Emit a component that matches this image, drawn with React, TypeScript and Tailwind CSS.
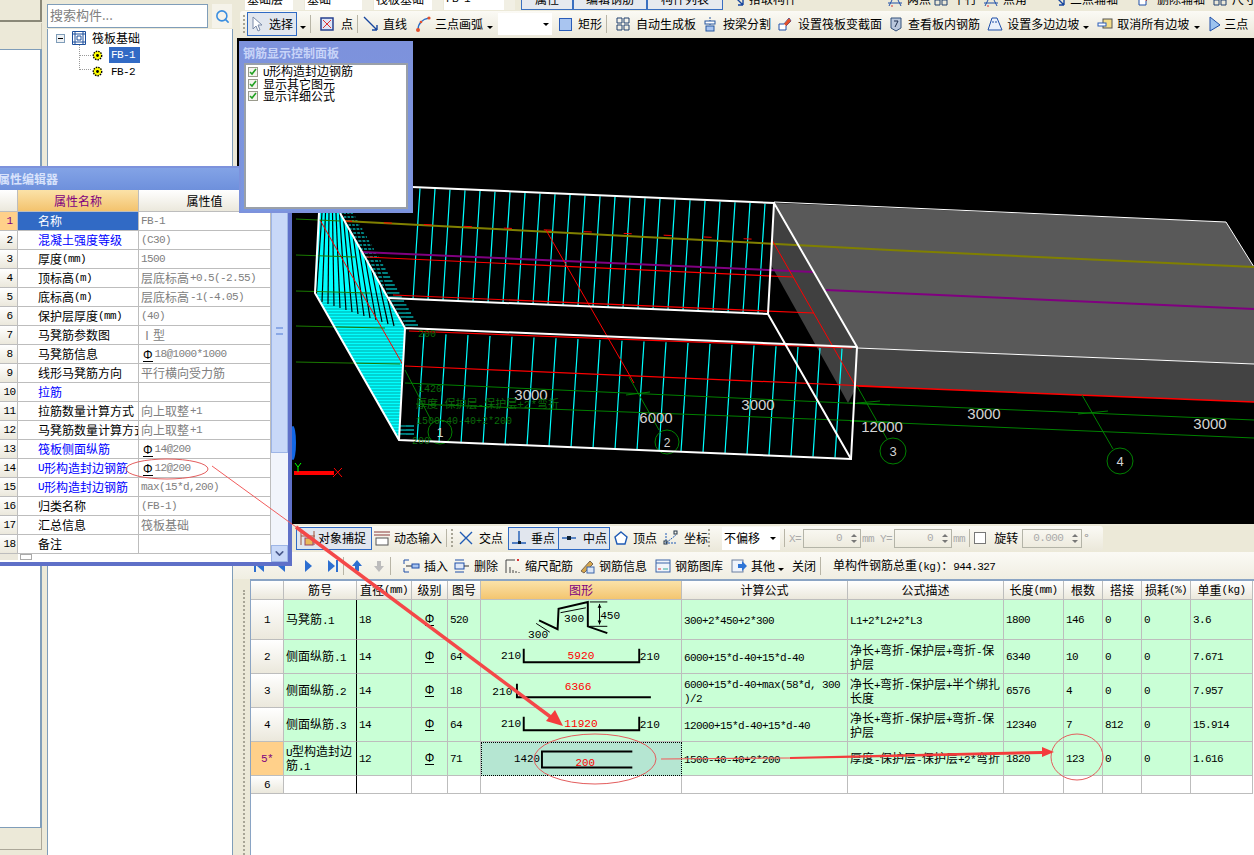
import type { ReactNode } from 'react';
import { Search, ChevronDown } from 'lucide-react';

// SimSun-like mix: CJK at 12px, latin squeezed to 6px per char
function T({ children }: { children: string }) {
  const parts = children.split(/([\x20-\x7e]+)/).filter(Boolean);
  return (
    <>
      {parts.map((p, i) =>
        /^[\x20-\x7e]+$/.test(p) ? (
          <span key={i} className="font-['Liberation_Mono',monospace] text-[11px] tracking-[-0.6px]">{p}</span>
        ) : (
          <span key={i}>{p}</span>
        ),
      )}
    </>
  );
}

function Grade() {
  return <span className="inline-block border-b border-current font-['Liberation_Sans',sans-serif] text-[12px] leading-[11px]">Φ</span>;
}

function Svg({ children, w = 16 }: { children: ReactNode; w?: number }) {
  return <svg width={w} height={16} viewBox={`0 0 ${w} 16`} fill="none" className="shrink-0">{children}</svg>;
}

const Cursor = () => <Svg><path d="M4 1v12l3-3 2 5 2-1-2-5h4z" fill="#fff" stroke="#7a8aa8" /></Svg>;
const PointIco = () => <Svg><rect x="2" y="2" width="12" height="12" fill="#dfe6f7" stroke="#27408f" strokeWidth="1.5" /><path d="M4 4l8 8M12 4l-8 8" stroke="#d33" /></Svg>;
const LineIco = () => <Svg><path d="M1 1l13 13M14 14v-5M14 14H9" stroke="#17469e" strokeWidth="1.4" /></Svg>;
const ArcIco = () => <Svg><path d="M3 14C3 7 8 3 14 2" stroke="#2b6cc4" strokeWidth="1.5" /><circle cx="3" cy="14" r="2" fill="#e2502c" /><circle cx="14" cy="2" r="1.6" fill="#e2502c" /><circle cx="6" cy="6" r="1.3" fill="#e2502c" /></Svg>;
const RectIco = () => <Svg><rect x="1.5" y="2.5" width="12" height="12" fill="#a9c5f0" stroke="#2a5cb8" /></Svg>;
const GridIco = () => <Svg><path d="M2 2h5v5H2zM9 2h5v5H9zM2 9h5v5H2zM9 9h5v5H9z" stroke="#21406f" /></Svg>;
const SplitIco = () => <Svg><path d="M8 1v14" stroke="#26569e" strokeDasharray="2 1" /><rect x="3" y="5" width="10" height="3" fill="#fff" stroke="#26569e" /><rect x="4" y="10" width="8" height="5" fill="#a9c5f0" stroke="#26569e" /></Svg>;
const SectionIco = () => <Svg><path d="M2 14V8h5l5-6 2 3-5 5v4z" fill="#fff" stroke="#1f4fa8" /><path d="M7 8l5-6 2 3-5 5z" fill="#e2502c" /></Svg>;
const ViewIco = () => <Svg><path d="M3 2h10v10l-5 3-5-3z" fill="#b9c7dc" stroke="#33507a" /><path d="M6 5h4L7 11" stroke="#1c2d4c" /></Svg>;
const SlopeIco = () => <Svg><path d="M1 14L5 2h5l5 12z" fill="#eaf1fb" stroke="#1f4fa8" /><path d="M5 6h6" stroke="#1f4fa8" strokeDasharray="2 1" /></Svg>;
const CancelIco = () => <Svg><rect x="6" y="3" width="9" height="9" fill="#f3dc88" stroke="#555" /><rect x="1" y="7" width="8" height="3" fill="#fff" stroke="#2a5cb8" /></Svg>;
const ThreeIco = () => <Svg><path d="M3 1v14l10-6z" fill="#9cc3ef" stroke="#1f4fa8" /></Svg>;
const SnapIco = () => <Svg><path d="M1 1v14M14 1v14M1 6h14" stroke="#a0523d" /><rect x="5" y="8" width="8" height="7" fill="#e8b95a" stroke="#946" /></Svg>;
const DynIco = () => <Svg><path d="M0 2h16M0 5h16" stroke="#8a3a3a" /><rect x="2" y="8" width="12" height="7" fill="#fff" stroke="#555" /></Svg>;
const CrossIco = () => <Svg><path d="M2 2l12 12M14 2L2 14" stroke="#1f5bb5" strokeWidth="1.4" /></Svg>;
const PerpIco = () => <Svg><path d="M8 1v12M1 13h14" stroke="#1f5bb5" strokeWidth="1.4" /><rect x="7" y="11" width="3" height="3" fill="#123" /></Svg>;
const MidIco = () => <Svg><path d="M1 8h14" stroke="#1f5bb5" strokeWidth="1.4" /><rect x="6" y="6" width="4" height="4" fill="#123" /></Svg>;
const VertexIco = () => <Svg><path d="M8 2l6 5-2 7H4L2 7z" stroke="#1f5bb5" strokeWidth="1.4" fill="#fff" /></Svg>;
const CoordIco = () => <Svg><path d="M3 13L13 5M3 3v10h10" stroke="#1f5bb5" strokeDasharray="2 1" /><rect x="11" y="1" width="3" height="3" stroke="#234" /><rect x="1" y="11" width="3" height="3" stroke="#234" /></Svg>;
const PlayIco = () => <Svg w={10}><path d="M2 2v12l7-6z" fill="#2d6fd0" /></Svg>;
const BackIco = () => <Svg w={10}><path d="M8 2v12L1 8z" fill="#2d6fd0" /></Svg>;
const LastIco = () => <Svg w={12}><path d="M1 2v12l7-6z" fill="#2d6fd0" /><path d="M9 2h2v12H9z" fill="#2d6fd0" /></Svg>;
const FirstIco = () => <Svg w={12}><path d="M11 2v12L4 8z" fill="#2d6fd0" /><path d="M1 2h2v12H1z" fill="#2d6fd0" /></Svg>;
const UpIco = () => <Svg w={14}><path d="M7 2l5 6H9v5H5V8H2z" fill="#2d6fd0" /></Svg>;
const DownIco = () => <Svg w={14}><path d="M7 14l5-6H9V3H5v5H2z" fill="#bcbcbc" /></Svg>;
const InsertIco = () => <Svg w={18}><path d="M7 2H2v4M7 14H2v-4" stroke="#1f4fa8" /><path d="M4 8h6" stroke="#333" /><rect x="10" y="6" width="7" height="4" fill="#a9c5f0" stroke="#1f4fa8" /></Svg>;
const DeleteIco = () => <Svg><path d="M1 2h9M1 14h9" stroke="#1f4fa8" /><rect x="1" y="5" width="9" height="6" fill="#dfe8f8" stroke="#1f4fa8" /><path d="M10 8h5" stroke="#333" /></Svg>;
const ScaleIco = () => <Svg><path d="M1 2v13M1 2h9M5 15V9M8 15v-3M11 15v-2M14 15v-1" stroke="#444" /><rect x="12" y="1" width="2" height="2" fill="#d33" /></Svg>;
const InfoIco = () => <Svg><path d="M2 13L11 3l3 3-9 9z" fill="#d7a74c" stroke="#765" /><rect x="8" y="9" width="7" height="6" fill="#dbe6f6" stroke="#3a64a8" /></Svg>;
const LibIco = () => <Svg><rect x="1" y="2" width="14" height="12" fill="#f0f4fa" stroke="#3a64a8" /><path d="M1 5h14" stroke="#3a64a8" /><path d="M3 11h3" stroke="#d33" /><path d="M8 11h5" stroke="#3a9" /></Svg>;
const OtherIco = () => <Svg><rect x="1" y="2" width="11" height="12" fill="#eef3fb" stroke="#6a7fa0" /><path d="M7 6h4V3l5 5-5 5v-3H7z" fill="#2d74d6" /></Svg>;
const AxisIco = () => <Svg><path d="M2 15L8 3M14 15L8 3M1 12h14" stroke="#1f4fa8" /><path d="M4 15h2" stroke="#d33" /></Svg>;
const Caret = () => <span className="inline-block h-0 w-0 border-x-[3px] border-t-[3px] border-x-transparent border-t-black" />;
const Sep = () => <div className="mx-[4px] h-[18px] w-px shrink-0 bg-[#b8b5a6]" />;
const Grip = () => <div className="mr-[2px] h-[18px] w-[2px] shrink-0 border-l-2 border-dotted border-[#a8a596]" />;

function Tool({ icon, label, className = '' }: { icon?: ReactNode; label: string; className?: string }) {
  return (
    <div className={`flex shrink-0 items-center gap-[4px] whitespace-nowrap ${className}`}>
      {icon}
      <span><T>{label}</T></span>
    </div>
  );
}

function Spin({ value, w }: { value: string; w: string }) {
  return (
    <div className={`flex h-[19px] shrink-0 items-center justify-end border border-[#b4b4a8] pr-[3px] text-[#aaa] ${w}`}>
      <T>{value}</T>
      <div className="ml-[9px] flex flex-col gap-[3px]">
        <span className="h-0 w-0 border-x-[3px] border-b-[3px] border-x-transparent border-b-[#777]" />
        <span className="h-0 w-0 border-x-[3px] border-t-[3px] border-x-transparent border-t-[#777]" />
      </div>
    </div>
  );
}

function TreeGear() {
  return (
    <svg width="11" height="11" viewBox="0 0 11 11" className="shrink-0">
      <circle cx="5.5" cy="5.5" r="4.2" fill="#ff0" stroke="#000" strokeWidth="1.4" strokeDasharray="1.5 1" />
      <circle cx="5.5" cy="5.5" r="1.4" fill="#000" />
    </svg>
  );
}

function TopRow() {
  const combos = [
    { label: '基础层', w: 'w-[48px]' },
    { label: '基础', w: 'w-[57px]' },
    { label: '筏板基础', w: 'w-[58px]' },
    { label: 'FB-1', w: 'w-[60px]' },
  ];
  const pill = 'flex h-[18px] shrink-0 items-center justify-center border border-[#3a6fc0] bg-[#e6e9ef] pb-[4px]';
  return (
    <div className="flex h-[10px] items-end overflow-hidden bg-[#ece9d8] pl-[12px]">
      {combos.map((c) => (
        <div key={c.label} className="mr-px flex shrink-0">
          <div className={`flex h-[18px] items-center bg-white pb-[4px] pl-[2px] ${c.w}`}><T>{c.label}</T></div>
          <div className="h-[18px] w-[11px] bg-[#f1efe4]" />
        </div>
      ))}
      <div className={`${pill} ml-[5px] w-[52px]`}><T>属性</T></div>
      <div className={`${pill} w-[74px]`}><T>编辑钢筋</T></div>
      <div className={`${pill} w-[76px]`}><T>构件列表</T></div>
      <Tool icon={<LineIco />} label="拾取构件" className="ml-[6px] h-[18px] pb-[4px]" />
      <Tool icon={<AxisIco />} label="两点" className="ml-[90px] h-[18px] pb-[4px]" />
      <Tool icon={<GridIco />} label="平行" className="ml-[2px] h-[18px] pb-[4px]" />
      <Tool icon={<AxisIco />} label="点角" className="ml-[6px] h-[18px] pb-[4px]" />
      <Tool icon={<LineIco />} label="三点辅轴" className="ml-[23px] h-[18px] pb-[4px]" />
      <Tool icon={<SectionIco />} label="删除辅轴" className="ml-[19px] h-[18px] pb-[4px]" />
      <Tool icon={<GridIco />} label="尺寸" className="ml-[7px] h-[18px] pb-[4px]" />
    </div>
  );
}

function DrawBar() {
  return (
    <div className="flex h-[28px] items-start overflow-hidden bg-[#ece9d8] pl-[7px] pt-[1px]">
      <div className="flex h-[26px] flex-1 items-center rounded-l-[3px] bg-linear-to-b from-[#fbfaf5] to-[#ebe8da] pl-[3px]">
        <Grip />
        <div className="flex h-[24px] w-[50px] shrink-0 items-center gap-[4px] whitespace-nowrap border border-[#2f6ac4] bg-[#e1e6ee] pl-px"><Cursor /><T>选择</T></div>
        <span className="ml-[3px]"><Caret /></span>
        <Sep />
        <Tool icon={<PointIco />} label="点" className="ml-[4px] gap-[6px]" />
        <Sep />
        <Tool icon={<LineIco />} label="直线" className="ml-px" />
        <Tool icon={<ArcIco />} label="三点画弧" className="ml-[8px]" />
        <span className="ml-[4px]"><Caret /></span>
        <div className="ml-[5px] flex h-[22px] w-[54px] shrink-0 items-center justify-end bg-white pr-[3px]"><Caret /></div>
        <Tool icon={<RectIco />} label="矩形" className="ml-[6px]" />
        <Sep />
        <Tool icon={<GridIco />} label="自动生成板" className="ml-[4px] gap-[5px]" />
        <Tool icon={<SplitIco />} label="按梁分割" className="ml-[6px] gap-[5px]" />
        <Tool icon={<SectionIco />} label="设置筏板变截面" className="ml-[6px] gap-[5px]" />
        <Tool icon={<ViewIco />} label="查看板内钢筋" className="ml-[6px] gap-[4px]" />
        <Tool icon={<SlopeIco />} label="设置多边边坡" className="ml-[7px] gap-[3px]" />
        <span className="ml-[4px]"><Caret /></span>
        <Tool icon={<CancelIco />} label="取消所有边坡" className="ml-[8px] gap-[3px]" />
        <span className="ml-[5px]"><Caret /></span>
        <Tool icon={<ThreeIco />} label="三点" className="ml-[7px] gap-px" />
      </div>
    </div>
  );
}

function Viewport() {
  const backLines = Array.from({ length: 24 }, (_, i) => 420 + i * 15);
  const frontLines = Array.from({ length: 20 }, (_, i) => 424 + i * 22);
  const comb = Array.from({ length: 29 }, (_, i) => 213 + i * 4);
  const lower = Array.from({ length: 50 }, (_, i) => 294 + i * 3);
  const rows = [219, 255, 291, 326, 362];
  return (
    <svg viewBox="237 38 1017 486" className="ml-[4px] block h-[486px] w-[1017px] bg-black">
      {/* slab */}
      <polygon points="774,203 1226,222 1254,267 1254,364 857,348" fill="#595959" />
      <polygon points="857,348 1254,364 1254,402 857,386" fill="#434343" />
      <polygon points="774,205 857,348 857,386 848,403 771,265" fill="#404040" />
      <path d="M774 202L1226 222L1254 267" stroke="#fff" fill="none" />
      <path d="M857 348L1254 364" stroke="#fff" />
      <path d="M857 386L1254 402" stroke="#f00" strokeWidth="1.5" />
      {/* left end hatch */}
      <polygon points="319,213 340,213 405,328 399,440 315,293" fill="#0ff" />
      {comb.map((y) => {
        const r = 340 + ((y - 213) * 65) / 112;
        return <line key={y} x1={r} y1={y} x2={r + 13} y2={y} stroke="#0ff" />;
      })}
      {[426, 430, 434].map((y) => <line key={y} x1={400} y1={y} x2={414} y2={y} stroke="#0ff" />)}
      {Array.from({ length: 14 }, (_, i) => (
        <line key={i} x1={322 + i * 3.5} y1={213} x2={316 + i * 6} y2={300 + i * 2} stroke="#000" strokeWidth="1.2" />
      ))}
      {lower.map((y) => <line key={y} x1={315} y1={y} x2={406} y2={y} stroke="#000" strokeWidth="0.35" />)}
      <polygon points="315,293 399,440 300,440 300,293" fill="#000" />
      {/* rebar ticks */}
      {backLines.map((x) => (
        <line key={x} x1={x} y1={188 + ((x - 412) * 16) / 362} x2={x - 7} y2={299 + ((x - 412) * 15) / 362} stroke="#0ff" strokeWidth="1.2" />
      ))}
      {frontLines.map((x) => (
        <line key={x} x1={x} y1={333 + ((x - 409) * 16) / 443} x2={x - 7} y2={441 + ((x - 409) * 17) / 443} stroke="#0ff" strokeWidth="1.2" />
      ))}
      <path d="M344 221L890 250L1254 267" stroke="#808000" strokeWidth="2" fill="none" />
      <path d="M361 252L814 272M826 290L1254 309" stroke="#800080" strokeWidth="2" fill="none" />
      <path d="M320 220L403 365M546 230L634 383M772 240L856 387" stroke="#f00" />
      <path d="M366 257L793 277M393 295L814 313M409 331L852 348M405 366L890 387" stroke="#f00" strokeWidth="1.2" />
      <path d="M344 221L772 240" stroke="#f00" strokeDasharray="8 32" />
      {rows.map((y, i) => (
        <path key={y} d={`M296 ${y}L${340 + i * 15} ${y + 2}`} stroke="#1a7a00" />
      ))}
      <path d="M405 383L890 405M850 403L1254 420M416 404L890 422M850 421L1254 438" stroke="#008000" fill="none" />
      <path d="M405 370L431 420M629 377L659 430M857 386L887 439M1082 395L1113 449" stroke="#008000" fill="none" />
      <path d="M626 395L650 392M857 403L880 401M1078 414L1108 411" stroke="#008000" />
      <circle cx="440" cy="432" r="12" stroke="#008000" fill="none" />
      <circle cx="667" cy="442" r="12" stroke="#008000" fill="none" />
      <circle cx="893" cy="451" r="13" stroke="#008000" fill="none" />
      <circle cx="1120" cy="461" r="13" stroke="#008000" fill="none" />
      <g stroke="#fff" strokeWidth="2" fill="none">
        <path d="M412 187L774 203L768 314L388 298M319 213L315 293L399 440L851 459L857 347L774 203" />
        <path d="M340 213L405 328L399 440M405 328L857 347M768 314L851 459" />
      </g>
      <g fontFamily="Liberation Sans, sans-serif" fontSize="15" fill="#d4d4d4" textAnchor="middle">
        <text x="531" y="400">3000</text>
        <text x="656" y="423">6000</text>
        <text x="758" y="410">3000</text>
        <text x="882" y="432">12000</text>
        <text x="984" y="419">3000</text>
        <text x="1210" y="429">3000</text>
        <text x="440" y="437" fontSize="12">1</text>
        <text x="667" y="447" fontSize="12">2</text>
        <text x="893" y="456" fontSize="13">3</text>
        <text x="1120" y="466" fontSize="13">4</text>
      </g>
      <g fontFamily="Liberation Mono, Noto Sans CJK SC, monospace" fontSize="10" fill="#0a6a0a">
        <text x="418" y="337">200</text>
        <text x="418" y="392">1420</text>
        <text x="416" y="408" fontSize="11">厚度-保护层-保护层+2*弯折</text>
        <text x="416" y="424">1500-40-40+2*200</text>
        <text x="412" y="444">200</text>
      </g>
      <path d="M294 473H334" stroke="#f00" strokeWidth="4" />
      <path d="M334 468l8 9M342 468l-9 9" stroke="#f00" />
      <path d="M298 472v-5M298 467l-3-4M298 467l3-4" stroke="#0f0" />
      <ellipse cx="293" cy="443" rx="3" ry="17" fill="#1268e8" />
    </svg>
  );
}

function SnapBar() {
  return (
    <div className="flex h-[28px] items-center bg-[#ece9d8] pl-[63px]">
      <div className="flex h-[25px] items-center rounded-[3px] bg-linear-to-b from-[#fbfaf5] to-[#ebe8da] pr-[14px]">
        <div className="flex h-[23px] w-[76px] shrink-0 items-center gap-[2px] whitespace-nowrap border border-[#2f6ac4] bg-[#e1e6ee] pl-[3px]"><SnapIco /><T>对象捕捉</T></div>
        <Tool icon={<DynIco />} label="动态输入" className="ml-[2px] gap-[3px]" />
        <Sep />
        <Grip />
        <Tool icon={<CrossIco />} label="交点" className="ml-[3px] gap-[5px]" />
        <div className="ml-[5px] flex h-[23px] w-[51px] shrink-0 items-center gap-[4px] whitespace-nowrap border border-[#2f6ac4] bg-[#e1e6ee] pl-[2px]"><PerpIco /><T>垂点</T></div>
        <div className="flex h-[23px] w-[51px] shrink-0 items-center gap-[6px] whitespace-nowrap border border-l-0 border-[#2f6ac4] bg-[#e1e6ee] pl-[2px]"><MidIco /><T>中点</T></div>
        <Tool icon={<VertexIco />} label="顶点" className="ml-[3px]" />
        <Tool icon={<CoordIco />} label="坐标" className="ml-[6px] gap-[5px]" />
        <Grip />
        <div className="ml-[10px] flex h-[23px] w-[58px] shrink-0 items-center justify-between whitespace-nowrap bg-white pl-[2px] pr-[4px]"><T>不偏移</T><Caret /></div>
        <Sep />
        <span className="text-[#aaa]"><T>X=</T></span>
        <Spin value="0" w="w-[58px] ml-[2px]" />
        <span className="ml-[1px] text-[#aaa]"><T>mm</T></span>
        <span className="ml-[6px] text-[#aaa]"><T>Y=</T></span>
        <Spin value="0" w="w-[58px] ml-[2px]" />
        <span className="ml-[1px] text-[#aaa]"><T>mm</T></span>
        <Sep />
        <span className="h-[12px] w-[12px] shrink-0 border border-[#777] bg-white" />
        <span className="ml-[8px] shrink-0"><T>旋转</T></span>
        <Spin value="0.000" w="w-[60px] ml-[4px]" />
        <span className="ml-[2px] text-[#888]">°</span>
      </div>
    </div>
  );
}

function RebarBar() {
  return (
    <div className="flex h-[27px] items-center bg-linear-to-b from-[#fbfaf5] to-[#f0eee2] pl-[20px]">
      <FirstIco />
      <span className="ml-[12px]"><BackIco /></span>
      <span className="ml-[16px]"><PlayIco /></span>
      <span className="ml-[14px]"><LastIco /></span>
      <Sep />
      <span className="ml-[2px]"><UpIco /></span>
      <span className="ml-[8px]"><DownIco /></span>
      <Sep />
      <Tool icon={<InsertIco />} label="插入" className="ml-[7px]" />
      <Tool icon={<DeleteIco />} label="删除" className="ml-[6px] gap-[4px]" />
      <Tool icon={<ScaleIco />} label="缩尺配筋" className="ml-[7px]" />
      <Tool icon={<InfoIco />} label="钢筋信息" className="ml-[6px]" />
      <Tool icon={<LibIco />} label="钢筋图库" className="ml-[8px]" />
      <Tool icon={<OtherIco />} label="其他" className="ml-[8px]" />
      <span className="ml-[3px]"><Caret /></span>
      <Tool label="关闭" className="ml-[8px]" />
      <Sep />
      <Tool label="单构件钢筋总重(kg)：944.327" className="ml-[8px]" />
    </div>
  );
}

const cols = ['', '筋号', '直径(mm)', '级别', '图号', '图形', '计算公式', '公式描述', '长度(mm)', '根数', '搭接', '损耗(%)', '单重(kg)'];

const rebar = [
  { n: '1', name: '马凳筋.1', d: '18', fig: '520', f: '300+2*450+2*300', desc: 'L1+2*L2+2*L3', len: '1800', c: '146', lap: '0', w: '3.6' },
  { n: '2', name: '侧面纵筋.1', d: '14', fig: '64', f: '6000+15*d-40+15*d-40', desc: '净长+弯折-保护层+弯折-保护层', len: '6340', c: '10', lap: '0', w: '7.671' },
  { n: '3', name: '侧面纵筋.2', d: '14', fig: '18', f: '6000+15*d-40+max(58*d, 300\n)/2', desc: '净长+弯折-保护层+半个绑扎长度', len: '6576', c: '4', lap: '0', w: '7.957' },
  { n: '4', name: '侧面纵筋.3', d: '14', fig: '64', f: '12000+15*d-40+15*d-40', desc: '净长+弯折-保护层+弯折-保护层', len: '12340', c: '7', lap: '812', w: '15.914' },
  { n: '5*', name: 'U型构造封边筋.1', d: '12', fig: '71', f: '1500-40-40+2*200', desc: '厚度-保护层-保护层+2*弯折', len: '1820', c: '123', lap: '0', w: '1.616' },
];

const numText = { fontFamily: 'Liberation Mono, monospace', fontSize: 11.5 };

function Shape({ n }: { n: string }) {
  if (n === '1')
    return (
      <svg viewBox="481 600 200 40" className="h-full w-full">
        <path d="M538 621L557 630L558 609L588 602V627L608 634" stroke="#000" strokeWidth="2" fill="none" />
        <path d="M590 602h18M590 627h18M600 604v21M535 624l14 9M560 613l26-5" stroke="#000" fill="none" />
        <path d="M600 604l-2 4h4zM600 625l-2-4h4z" fill="#000" />
        <text x="574" y="623" textAnchor="middle" {...numText}>300</text>
        <text x="611" y="620" textAnchor="middle" {...numText}>450</text>
        <text x="537" y="639" textAnchor="middle" {...numText}>300</text>
      </svg>
    );
  if (n === '2' || n === '4') {
    const y0 = n === '2' ? 640 : 708;
    return (
      <svg viewBox={`481 ${y0} 200 34`} className="h-full w-full">
        <path d={`M522 ${y0 + 9}V${y0 + 23}H641V${y0 + 9}`} stroke="#000" strokeWidth="2" fill="none" />
        <text x="509" y={y0 + 20} textAnchor="middle" {...numText}>210</text>
        <text x="652" y={y0 + 21} textAnchor="middle" {...numText}>210</text>
        <text x="581" y={y0 + 20} textAnchor="middle" fill="#f00" {...numText}>{n === '2' ? '5920' : '11920'}</text>
      </svg>
    );
  }
  if (n === '3')
    return (
      <svg viewBox="481 674 200 34" className="h-full w-full">
        <path d="M515 684V698H653" stroke="#000" strokeWidth="2" fill="none" />
        <text x="500" y="696" textAnchor="middle" {...numText}>210</text>
        <text x="578" y="691" textAnchor="middle" fill="#f00" {...numText}>6366</text>
      </svg>
    );
  return (
    <svg viewBox="481 742 200 34" className="h-full w-full">
      <path d="M635 751H539V768H635" stroke="#000" strokeWidth="2" fill="none" />
      <text x="523" y="762" textAnchor="middle" {...numText}>1420</text>
      <text x="585" y="766" textAnchor="middle" fill="#f00" {...numText}>200</text>
    </svg>
  );
}

function Table() {
  const cell = 'flex items-center border-r border-b border-[#bdbdbd] px-[2px] leading-[12px] overflow-hidden';
  return (
    <div className="ml-[17px] min-h-0 flex-1 overflow-hidden border-l border-t-2 border-[#8aa4c4] bg-white">
      <div className="grid grid-cols-[33px_73px_55px_36px_33px_201px_166px_156px_60px_39px_39px_49px_62px] grid-rows-[19px_40px_34px_34px_34px_34px_18px]">
        {cols.map((c, i) => (
          <div
            key={i}
            className={`flex items-center justify-center whitespace-nowrap border-r border-b border-[#bdbdbd] bg-linear-to-b ${
              i === 5 ? 'from-[#fbe2a8] to-[#f3c56f] text-[#800080]' : 'from-white to-[#ebe8dc]'
            }`}
          >
            <T>{c}</T>
          </div>
        ))}
        {rebar.map((r) => {
          const sel = r.n === '5*';
          return (
            <div key={r.n} className="contents">
              <div className={`flex items-center justify-center border-r border-b border-[#bdbdbd] ${sel ? 'bg-[#ffd08a] text-[#800080]' : 'bg-linear-to-b from-white to-[#ebe8dc]'}`}><T>{r.n}</T></div>
              <div className={`${cell} border-r-black bg-[#c9ffd6]`}><div className="break-all"><T>{r.name}</T></div></div>
              <div className={`${cell} bg-[#c9ffd6]`}><T>{r.d}</T></div>
              <div className={`${cell} justify-center bg-[#c9ffd6]`}><Grade /></div>
              <div className={`${cell} bg-[#c9ffd6]`}><T>{r.fig}</T></div>
              <div className={`overflow-hidden ${sel ? 'border border-dotted border-black bg-[#b5e6d2]' : 'border-r border-b border-[#bdbdbd] bg-[#c9ffd6]'}`}><Shape n={r.n} /></div>
              <div className="flex items-center overflow-hidden border-r border-b border-[#bdbdbd] bg-[#c9ffd6] pl-[2px] leading-[12px]"><div className="w-[163px] whitespace-pre-line"><T>{r.f}</T></div></div>
              <div className={`${cell} bg-[#c9ffd6]`}><div><T>{r.desc}</T></div></div>
              <div className={`${cell} bg-[#c9ffd6]`}><T>{r.len}</T></div>
              <div className={`${cell} bg-[#c9ffd6]`}><T>{r.c}</T></div>
              <div className={`${cell} bg-[#c9ffd6]`}><T>{r.lap}</T></div>
              <div className={`${cell} bg-[#c9ffd6]`}><T>0</T></div>
              <div className={`${cell} bg-[#c9ffd6]`}><T>{r.w}</T></div>
            </div>
          );
        })}
        <div className="flex items-center justify-center border-r border-b border-[#bdbdbd] bg-linear-to-b from-white to-[#ebe8dc]"><T>6</T></div>
        {cols.slice(1).map((c, i) => (
          <div key={c} className={`border-r border-b border-[#bdbdbd] ${i === 0 ? 'border-r-black' : ''}`} />
        ))}
      </div>
    </div>
  );
}

const props: { name: string; value?: string; blue?: boolean; grade?: boolean }[] = [
  { name: '名称', value: 'FB-1' },
  { name: '混凝土强度等级', value: '(C30)', blue: true },
  { name: '厚度(mm)', value: '1500' },
  { name: '顶标高(m)', value: '层底标高+0.5(-2.55)' },
  { name: '底标高(m)', value: '层底标高-1(-4.05)' },
  { name: '保护层厚度(mm)', value: '(40)' },
  { name: '马凳筋参数图', value: 'Ⅰ型' },
  { name: '马凳筋信息', value: '18@1000*1000', grade: true },
  { name: '线形马凳筋方向', value: '平行横向受力筋' },
  { name: '拉筋', blue: true },
  { name: '拉筋数量计算方式', value: '向上取整+1' },
  { name: '马凳筋数量计算方式', value: '向上取整+1' },
  { name: '筏板侧面纵筋', value: '14@200', blue: true, grade: true },
  { name: 'U形构造封边钢筋', value: '12@200', blue: true, grade: true },
  { name: 'U形构造封边钢筋', value: 'max(15*d,200)', blue: true },
  { name: '归类名称', value: '(FB-1)' },
  { name: '汇总信息', value: '筏板基础' },
  { name: '备注' },
];

function PropertyWindow() {
  return (
    <div className="absolute left-[-6px] top-[166px] flex h-[400px] w-[298px] flex-col border-[2px] border-[#7d92dc] border-r-[4px] border-b-[4px] border-b-[#5f70c8] border-r-[#5f70c8] bg-[#f4f2ea]">
      <div className="flex h-[22px] shrink-0 items-center bg-linear-to-b from-[#83a3e6] to-[#6e90dc] pl-[2px] font-bold text-[#d8e2fb]">属性编辑器</div>
      <div className="flex min-h-0 flex-1 bg-white">
        <div className="w-[275px] shrink-0 overflow-hidden">
          <div className="grid h-[22px] grid-cols-[22px_121px_132px]">
            <div className="border-r border-b border-[#bdbdbd] bg-linear-to-b from-white to-[#ebe8dc]" />
            <div className="flex items-center justify-center border-r border-b border-[#bdbdbd] bg-linear-to-b from-[#fbe2a8] to-[#f3c36d] text-[#800080]">属性名称</div>
            <div className="flex items-center justify-center border-r border-b border-[#bdbdbd] bg-linear-to-b from-white to-[#ebe8dc]">属性值</div>
          </div>
          {props.map((p, i) => (
            <div key={i} className="grid h-[19px] grid-cols-[22px_121px_132px]">
              <div className={`flex items-center justify-center border-r border-b border-[#bdbdbd] pl-[6px] ${i === 0 ? 'bg-[#ffd08a] text-[#800080]' : 'bg-linear-to-b from-white to-[#ebe8dc]'}`}><T>{String(i + 1)}</T></div>
              <div className={`flex items-center overflow-hidden whitespace-nowrap border-r border-b border-[#bdbdbd] pl-[20px] ${i === 0 ? 'bg-[#316ac5] text-white' : p.blue ? 'text-[#0000ff]' : ''}`}><T>{p.name}</T></div>
              <div className="flex items-center gap-[1px] overflow-hidden whitespace-nowrap border-r border-b border-[#bdbdbd] pl-[2px] text-[#808080]">
                {p.grade && <span className="ml-[2px] mr-[1px] text-black"><Grade /></span>}
                <T>{p.value ?? ''}</T>
              </div>
            </div>
          ))}
          <div className="grid h-[6px] grid-cols-[22px_121px_132px] overflow-hidden">
            <div className="bg-[#ebe8dc]" />
            <div className="pl-[2px]"><span className="block h-[6px] w-[12px] border border-[#aaa]" /></div>
            <div />
          </div>
        </div>
        <div className="flex w-[17px] shrink-0 flex-col bg-[#f1f4fb]">
          <div className="flex h-[263px] items-center justify-center border border-[#9db5e6] bg-[#c8d8f8] pt-[18px]">
            <div className="h-[8px] w-[7px] border-y-2 border-[#8aa8e6]" />
          </div>
          <div className="flex-1" />
          <div className="flex h-[17px] items-center justify-center border border-[#9db5e6] bg-[#c8d8f8] text-[#4a5a8c]"><ChevronDown size={13} strokeWidth={3} /></div>
        </div>
      </div>
    </div>
  );
}

function ControlPanel() {
  const items = ['U形构造封边钢筋', '显示其它图元', '显示详细公式'];
  return (
    <div className="absolute left-[239px] top-[41px] flex h-[172px] w-[174px] flex-col border-[2px] border-[#7d92dc] bg-linear-to-b from-[#7d92dc] to-[#7a96e0]">
      <div className="flex h-[20px] shrink-0 items-center pl-[2px] font-bold text-[#c8d4f8]">钢筋显示控制面板</div>
      <div className="mx-[3px] mb-[2px] flex-1 border-2 border-[#9aa0a8] bg-white pl-[2px] pt-px">
        {items.map((t) => (
          <div key={t} className="flex h-[12px] items-center gap-[5px] whitespace-nowrap leading-[12px]">
            <span className="flex h-[10px] w-[10px] shrink-0 items-center justify-center border border-[#9a9a8c] bg-[#f3f3ec]">
              <svg width="8" height="8" viewBox="0 0 8 8"><path d="M1 4l2 2 4-5" stroke="#21a121" strokeWidth="1.6" fill="none" /></svg>
            </span>
            <span><T>{t}</T></span>
          </div>
        ))}
      </div>
    </div>
  );
}

function Annotations() {
  return (
    <svg className="pointer-events-none absolute left-0 top-0 h-[855px] w-[1254px]" viewBox="0 0 1254 855" fill="none">
      <ellipse cx="167" cy="469" rx="41" ry="10" stroke="#e35d5d" />
      <ellipse cx="595" cy="759" rx="61" ry="25" stroke="#e35d5d" />
      <ellipse cx="1077" cy="757" rx="26" ry="23" stroke="#e35d5d" />
      <path d="M212 466L296 527" stroke="#f25c5c" />
      <path d="M296 527L552 718" stroke="#f44848" strokeWidth="3.5" />
      <path d="M563 726L546 721L555 710z" fill="#f43c3c" />
      <path d="M661 759L790 758" stroke="#f25c5c" strokeWidth="1.2" />
      <path d="M790 757L1042 751V754L790 759z" fill="#f43c3c" />
      <path d="M1054 752L1042 747V757z" fill="#f43c3c" />
    </svg>
  );
}

export default function App() {
  return (
    <div className="relative flex h-[855px] w-[1254px] overflow-hidden bg-[#ece9d8] font-['Noto_Sans_CJK_SC','Liberation_Sans',sans-serif] text-[12px] leading-[14px] text-black">
      {/* left stub panel */}
      <div className="flex w-[42px] shrink-0 flex-col">
        <div className="h-[22px] border-r-2 border-b-2 border-[#8a8878] bg-[#ece9d8]" />
        <div className="mt-[1px] h-[26px] border-r border-[#c8c5b4] bg-[#ece9d8]" />
        <div className="h-[779px] border-y border-r-2 border-[#7f9db9] bg-white" />
        <div className="h-[22px] border-r border-b border-[#aca899]" />
      </div>
      {/* tree panel */}
      <div className="ml-[5px] flex w-[186px] shrink-0 flex-col">
        <div className="flex h-[29px] shrink-0 items-center pt-[3px]">
          <div className="flex h-[24px] w-[161px] items-center border border-[#7f9db9] bg-white pb-[3px] pl-[2px] text-[13px] text-[#808080]">搜索构件...</div>
          <div className="ml-[4px] flex h-[24px] w-[20px] items-center justify-center bg-[#f5f3ea] text-[#3a8ee0]"><Search size={15} strokeWidth={2.5} /></div>
        </div>
        <div className="relative flex-1 border-x border-[#7f9db9] bg-white">
          <div className="flex h-[18px] items-center pl-[8px]">
            <span className="flex h-[9px] w-[9px] items-center justify-center border border-[#7f9db9] bg-[#eef1f4]"><span className="h-px w-[5px] bg-black" /></span>
            <svg width="14" height="14" viewBox="0 0 14 14" className="ml-[7px]"><path d="M.5.5h13v13H.5zM3 0v14M11 0v14M0 3h14M0 11h14M5 5h4v4H5z" stroke="#1d4f9c" fill="#fff" /></svg>
            <span className="ml-[6px] text-[12px]">筏板基础</span>
          </div>
          <div className="flex h-[16px] items-center pl-[44px]">
            <TreeGear />
            <span className="ml-[6px] flex h-[16px] w-[31px] items-center bg-[#316ac5] pl-[2px] text-white"><T>FB-1</T></span>
          </div>
          <div className="flex h-[16px] items-center pl-[44px]">
            <TreeGear />
            <span className="ml-[8px]"><T>FB-2</T></span>
          </div>
          <div className="absolute left-[31px] top-[16px] h-[25px] w-[12px] border-b border-l border-dotted border-[#999]" />
          <div className="absolute left-[31px] top-[26px] h-px w-[12px] border-t border-dotted border-[#999]" />
        </div>
      </div>
      {/* main area */}
      <div className="relative flex min-w-0 flex-1 flex-col">
        <div className="absolute left-[10px] top-[590px] h-[265px] w-[2px] border-l-2 border-dotted border-[#a8a596]" />
        <TopRow />
        <DrawBar />
        <Viewport />
        <SnapBar />
        <RebarBar />
        <Table />
      </div>
      <PropertyWindow />
      <ControlPanel />
      <Annotations />
    </div>
  );
}
